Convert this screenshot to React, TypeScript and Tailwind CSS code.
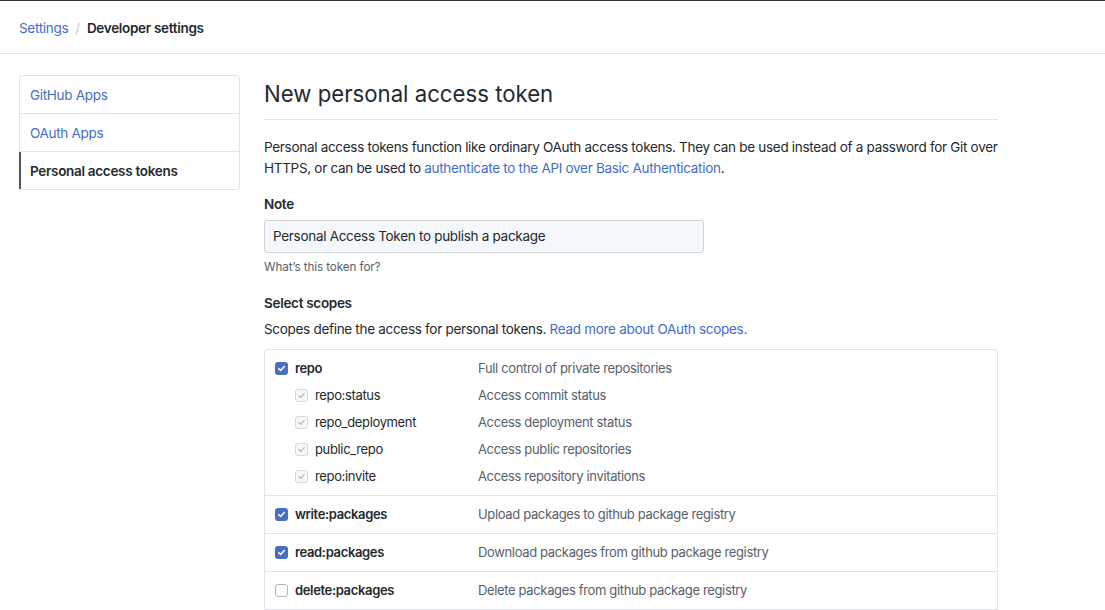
import React from "react";

const font = { fontFamily: "Inter, 'Noto Sans', 'Liberation Sans', sans-serif" };

type Scope = { name: string; desc: string; state: "on" | "off" | "sub" };

const repoSubs: Scope[] = [
  { name: "repo:status", desc: "Access commit status", state: "sub" },
  { name: "repo_deployment", desc: "Access deployment status", state: "sub" },
  { name: "public_repo", desc: "Access public repositories", state: "sub" },
  { name: "repo:invite", desc: "Access repository invitations", state: "sub" },
];

const pkgScopes: Scope[] = [
  { name: "write:packages", desc: "Upload packages to github package registry", state: "on" },
  { name: "read:packages", desc: "Download packages from github package registry", state: "on" },
  { name: "delete:packages", desc: "Delete packages from github package registry", state: "off" },
];

function Check({ state }: { state: Scope["state"] }) {
  if (state === "on")
    return (
      <span className="w-[13px] h-[13px] rounded-[3px] bg-[#4b6fc0] flex items-center justify-center shrink-0">
        <svg width="9" height="9" viewBox="0 0 10 10" fill="none">
          <path d="M2 5.2l2 2L8 2.8" stroke="#fff" strokeWidth="1.7" strokeLinecap="round" strokeLinejoin="round" />
        </svg>
      </span>
    );
  if (state === "sub")
    return (
      <span className="w-[13px] h-[13px] rounded-[3px] border border-[#d8d8d8] bg-[#f7f7f7] flex items-center justify-center shrink-0">
        <svg width="9" height="9" viewBox="0 0 10 10" fill="none">
          <path d="M2.2 5.2l2 2L8 2.8" stroke="#a8a8a8" strokeWidth="1.2" strokeLinecap="round" strokeLinejoin="round" />
        </svg>
      </span>
    );
  return <span className="w-[13px] h-[13px] rounded-[3px] border border-[#b5b5b5] bg-white shrink-0" />;
}

function ScopeLine({ s, sub }: { s: Scope; sub?: boolean }) {
  return (
    <div className={`flex items-center h-[21px] ${sub ? "mt-[6px] pl-[20px]" : ""}`}>
      <div className={`flex items-center gap-[7px] ${sub ? "w-[183px]" : "w-[203px]"}`}>
        <Check state={s.state} />
        <span className={sub ? "text-[#24292e]" : "font-semibold text-[#24292e]"}>{s.name}</span>
      </div>
      <span className="text-[#586069]">{s.desc}</span>
    </div>
  );
}

export default function App() {
  return (
    <div className="min-h-screen bg-white text-[#24292e] text-[13.5px] tracking-[-0.3px] leading-[21px] border-t border-[#333]" style={font}>
      <div className="h-[53px] border-b border-[#e1e4e8] flex items-center pl-[19px] pt-[2px] text-[13.5px]">
        <a className="text-[#3f6ec6]">Settings</a>
        <span className="text-[#c6cbd1] mx-[7px]">/</span>
        <span className="font-semibold">Developer settings</span>
      </div>

      <div className="flex pl-[19px] pt-[21px]">
        <nav className="w-[221px] shrink-0 self-start border border-[#e1e4e8] rounded-[3px]">
          <div className="h-[38px] flex items-center pl-[10px] pt-px border-b border-[#e1e4e8] text-[#3f6ec6]">GitHub Apps</div>
          <div className="h-[38px] flex items-center pl-[10px] pt-px border-b border-[#e1e4e8] text-[#3f6ec6]">OAuth Apps</div>
          <div className="h-[37px] flex items-center pl-[9px] pt-px border-l-2 border-[#555] font-semibold -ml-px">Personal access tokens</div>
        </nav>

        <main className="ml-[24px] w-[734px]">
          <h1 className="text-[22.2px] tracking-[0px] leading-[36px] font-normal pb-[7px] border-b border-[#e1e4e8] mt-px">New personal access token</h1>
          <p className="mt-[17px]">
            Personal access tokens function like ordinary OAuth access tokens. They can be used instead of a password for Git over HTTPS, or can be used to{" "}
            <a className="text-[#3f6ec6]">authenticate to the API over Basic Authentication</a>.
          </p>

          <div className="mt-[15px] font-semibold">Note</div>
          <div className="mt-[5px] w-[440px] h-[33px] border border-[#d1d5da] rounded-[3px] bg-[#f5f8fb] flex items-center pl-[8px]">
            Personal Access Token to publish a package
          </div>
          <div className="mt-[5px] text-[11.7px] tracking-[-0.1px] leading-[18px] text-[#586069]">What’s this token for?</div>

          <div className="mt-[17px] font-semibold">Select scopes</div>
          <div className="mt-[5px]">
            Scopes define the access for personal tokens.{" "}
            <a className="text-[#3f6ec6]">Read more about OAuth scopes.</a>
          </div>

          <div className="mt-[9px] border border-[#e1e4e8] rounded-t-[3px] text-[13px] tracking-[-0.35px]">
            <div className="px-[10px] pt-[8px] pb-[8px] border-b border-[#e1e4e8]">
              <ScopeLine s={{ name: "repo", desc: "Full control of private repositories", state: "on" }} />
              {repoSubs.map((s) => (
                <ScopeLine key={s.name} s={s} sub />
              ))}
            </div>
            {pkgScopes.map((s) => (
              <div key={s.name} className="px-[10px] pt-[8px] pb-[8px] border-b border-[#e1e4e8]">
                <ScopeLine s={s} />
              </div>
            ))}
          </div>
        </main>
      </div>
    </div>
  );
}
